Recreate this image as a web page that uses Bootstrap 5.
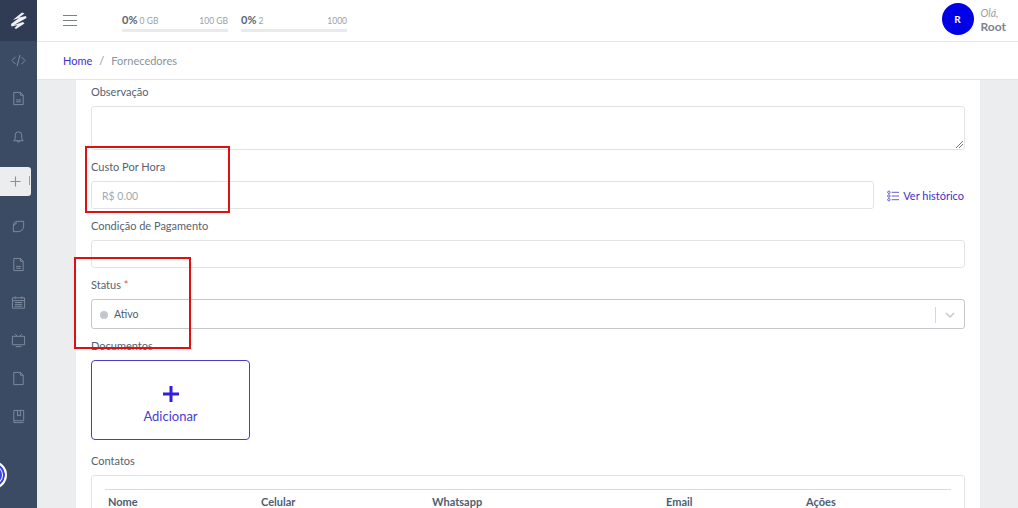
<!DOCTYPE html>
<html lang="pt-BR">
<head>
<meta charset="utf-8">
<title>Fornecedores</title>
<link href="https://cdn.jsdelivr.net/npm/bootstrap@5.3.0/dist/css/bootstrap.min.css" rel="stylesheet">
<style>
html,body{height:508px;overflow:hidden;}
body{font-family:Lato,"Open Sans",sans-serif;font-size:11px;color:#56626f;background:#ebedef;}
.app-shell{height:508px;}
.side-rail{width:37px;background:#3c4b64;flex:none;position:relative;}
.rail-logo{height:41px;background:#303c54;}
.rail-item{height:38px;color:#808da1;}
.rail-item svg{width:15px;height:15px;fill:none;stroke:currentColor;stroke-width:1;}
.rail-active{height:29px;width:31px;background:#ebedef;border-radius:0 3px 3px 0;margin:12px 0 11px;color:#8a8f96;position:relative;}
.rail-active::after{content:"";position:absolute;right:1px;top:9px;height:9px;width:1px;background:#9a9fa6;}
.rail-badge{position:absolute;left:-21px;top:461px;width:28px;height:28px;border-radius:50%;background:#fff;border:2px solid #fff;box-shadow:inset 0 0 0 2px #3d44e0;}
.rail-badge::after{content:"";position:absolute;inset:3px;border:2px solid #3d44e0;border-radius:50%;}
.top-strip{height:42px;background:#fff;border-bottom:1px solid #e4e7ea;flex:none;}
.burger{width:14px;margin-left:26px;margin-right:45px;}
.burger i{display:block;height:1px;background:#7b818a;margin-bottom:4px;}
.burger i:last-child{margin-bottom:0;}
.meter{width:106px;margin-right:13px;font-size:8.5px;color:#9aa0a8;padding-top:3px;}
.meter b{font-size:11px;color:#5b6470;}
.meter-track{height:3px;background:#e8eaec;margin-top:1px;}
.avatar{width:32px;height:32px;background:#0000e6;color:#fff;font-weight:700;font-size:10px;margin-bottom:3px;}
.hello{font-size:10.5px;line-height:13px;color:#9aa0a8;margin:0 12px 0 7px;}
.hello b{color:#7d838c;font-size:12px;}
.crumb-strip{height:38px;background:#fff;border-bottom:1px solid #e4e7ea;flex:none;padding:2px 0 0 26px;font-size:11px;color:#8a93a0;}
.crumb-strip a{color:#3f2fd0;text-decoration:none;}
.crumb-sep{margin:0 7px;}
.form-sheet{margin:0 38px 0 39px;background:#fff;padding:4px 15px 0;height:428px;overflow:hidden;position:relative;}
.f-label{line-height:15px;height:15px;font-size:11px;color:#56626f;}
.f-box{border:1px solid #e1e4e7;border-radius:3px;background:#fff;display:block;}
.f-text{height:44px;margin:7px 0 9px;position:relative;}
.f-text::after{content:"";position:absolute;right:1px;bottom:1px;width:7px;height:7px;background:linear-gradient(135deg,transparent 45%,#777 45%,#777 52%,transparent 52%,transparent 70%,#777 70%,#777 77%,transparent 77%);}
.f-input{height:28px;padding:1px 10px 0;line-height:27px;font-size:10.5px;color:#a3a9b1;}
.f-gap{margin-top:7px;margin-bottom:9px;}
.history{width:91px;color:#3f2fd0;font-size:11px;white-space:nowrap;padding:2px 1px 0 0;}
.history svg{width:12px;height:12px;margin-right:4px;}
.f-req{color:#e55353;}
.f-select{height:30px;border:1px solid #c4c8cd;border-radius:3px;margin:7px 0 9px;padding:1px 0 0 8px;}
.status-dot{width:8px;height:8px;background:#c4c7cb;border-radius:50%;margin-right:6px;}
.status-text{font-size:10.5px;color:#4f5d73;padding-top:1px;}
.sel-arrow{border-left:1px solid #d3d6da;height:16px;width:29px;}
.add-tile{width:159px;height:80px;border:1px solid #4a3dc4;border-radius:4px;margin-top:7px;margin-bottom:13px;color:#4a3dc8;background:#fff;font-size:13px;padding:13px 0 0;}
.add-tile svg{width:16px;height:16px;margin-bottom:5px;}
.contact-box{height:60px;margin-top:7px;padding:13px 13px 0;}
.contact-head{border-top:1px solid #d8dbe0;padding-top:4px;font-weight:700;font-size:11px;line-height:15px;color:#4f5d73;}
.contact-head span{padding-left:3px;}
.note-box{position:absolute;border:2px solid #e01010;pointer-events:none;z-index:5;}
.note-a{left:85px;top:146px;width:145px;height:67px;}
.note-b{left:74px;top:257px;width:117px;height:92px;}
</style>
</head>
<body>
<div class="app-shell d-flex">
  <aside class="side-rail d-flex flex-column">
    <div class="rail-logo d-flex align-items-center justify-content-center">
      <svg width="16" height="19" viewBox="0 0 16 19"><path d="M3 8 11 1.500l2.500 1L8 6.500l7-1.500.500 2L3 14l9-3 1.500 1.500L5 18l-1.500-1 3-3-6 1.500L0 13l8-6-6 2z" fill="#f0f2f5"/></svg>
    </div>
    <div class="rail-item d-flex align-items-center justify-content-center"><svg viewBox="0 0 16 16"><path d="M5 4 1 8l4 4M11 4l4 4-4 4M9.500 2 6.500 14"/></svg></div>
    <div class="rail-item d-flex align-items-center justify-content-center"><svg viewBox="0 0 16 16"><path d="M3 1.500h7l3 3v10H3zM10 1.500v3h3M5.500 9.500h5M5.500 11.500h5"/></svg></div>
    <div class="rail-item d-flex align-items-center justify-content-center"><svg viewBox="0 0 16 16"><path d="M3 12.500h10l-1.500-2V6.500a3.500 3.500 0 0 0-7 0v4zM6.500 12.500a1.500 1.500 0 0 0 3 0"/></svg></div>
    <div class="rail-active d-flex align-items-center justify-content-center"><svg width="13" height="13" viewBox="0 0 13 13"><path d="M6.500 1.500v10M1.500 6.500h10" stroke="#8a8f96" stroke-width="1.100" fill="none"/></svg></div>
    <div class="rail-item d-flex align-items-center justify-content-center"><svg viewBox="0 0 16 16"><path d="M5.500 2.500h8v5a6 6 0 0 1-6 6h-5v-6a5 5 0 0 1 3-5zM3.500 7a4 4 0 0 1 3-3"/></svg></div>
    <div class="rail-item d-flex align-items-center justify-content-center"><svg viewBox="0 0 16 16"><path d="M3 1.500h7l3 3v10H3zM10 1.500v3h3M5.500 10h5M5.500 12h5"/></svg></div>
    <div class="rail-item d-flex align-items-center justify-content-center"><svg viewBox="0 0 16 16"><path d="M1.500 3h13v11h-13zM1.500 6h13M4.500 1.500V4M11.500 1.500V4M4 8h8M4 10h8M4 12h8" /></svg></div>
    <div class="rail-item d-flex align-items-center justify-content-center"><svg viewBox="0 0 16 16"><path d="M1.500 3.500h13v9h-13zM5 14.500h6M4.500 1l2 2.500M11.500 1l-2 2.500"/></svg></div>
    <div class="rail-item d-flex align-items-center justify-content-center"><svg viewBox="0 0 16 16"><path d="M3 1.500h7l3 3v10H3zM10 1.500v3h3"/></svg></div>
    <div class="rail-item d-flex align-items-center justify-content-center"><svg viewBox="0 0 16 16"><path d="M3 1.500h10.500v11H3zM3 12.500v2h10.500M7 1.500v6l1.500-1 1.500 1v-6"/></svg></div>
    <div class="rail-badge"></div>
  </aside>
  <div class="flex-grow-1 d-flex flex-column" style="min-width:0">
    <header class="top-strip d-flex align-items-center">
      <div class="burger"><i></i><i></i><i></i></div>
      <div class="meter"><div class="d-flex justify-content-between align-items-baseline"><span><b>0%</b> 0 GB</span><span>100 GB</span></div><div class="meter-track"></div></div>
      <div class="meter"><div class="d-flex justify-content-between align-items-baseline"><span><b>0%</b> 2</span><span>1000</span></div><div class="meter-track"></div></div>
      <div class="ms-auto d-flex align-items-center">
        <div class="avatar rounded-circle d-flex align-items-center justify-content-center">R</div>
        <div class="hello"><i>Olá,</i><br><b>Root</b></div>
      </div>
    </header>
    <nav class="crumb-strip d-flex align-items-center"><a href="#">Home</a><span class="crumb-sep">/</span><span>Fornecedores</span></nav>
    <main class="form-sheet">
      <div class="f-label">Observação</div>
      <div class="f-box f-text"></div>
      <div class="f-label">Custo Por Hora</div>
      <div class="d-flex align-items-center f-gap">
        <div class="f-box f-input flex-grow-1">R$ 0.00</div>
        <div class="history d-flex align-items-center justify-content-end">
          <svg viewBox="0 0 13 13" fill="none" stroke="#5a4dd0" stroke-width="1"><circle cx="2" cy="2.500" r="1.300"/><circle cx="2" cy="6.500" r="1.300"/><circle cx="2" cy="10.500" r="1.300"/><path d="M5 2.500h8M5 6.500h8M5 10.500h8"/></svg>Ver histórico
        </div>
      </div>
      <div class="f-label">Condição de Pagamento</div>
      <div class="f-box f-input f-gap"></div>
      <div class="f-label">Status <span class="f-req">*</span></div>
      <div class="f-select d-flex align-items-center">
        <span class="status-dot"></span><span class="status-text">Ativo</span>
        <span class="sel-arrow ms-auto d-flex align-items-center justify-content-center"><svg width="10" height="6" viewBox="0 0 10 6"><path d="M1 1l4 4 4-4" fill="none" stroke="#c4c8cd" stroke-width="1.500"/></svg></span>
      </div>
      <div class="f-label">Documentos</div>
      <button class="add-tile d-flex flex-column align-items-center justify-content-center" type="button">
        <svg viewBox="0 0 16 16"><path d="M8 0v16M0 8h16" stroke="#321fdb" stroke-width="3"/></svg>
        Adicionar
      </button>
      <div class="f-label">Contatos</div>
      <div class="f-box contact-box">
        <div class="contact-head d-flex">
          <span style="width:153px">Nome</span><span style="width:171px">Celular</span><span style="width:234px">Whatsapp</span><span style="width:140px">Email</span><span>Ações</span>
        </div>
      </div>
    </main>
  </div>
</div>
<div class="note-box note-a"></div>
<div class="note-box note-b"></div>
<script src="https://cdn.jsdelivr.net/npm/bootstrap@5.3.0/dist/js/bootstrap.bundle.min.js"></script>
</body>
</html>
